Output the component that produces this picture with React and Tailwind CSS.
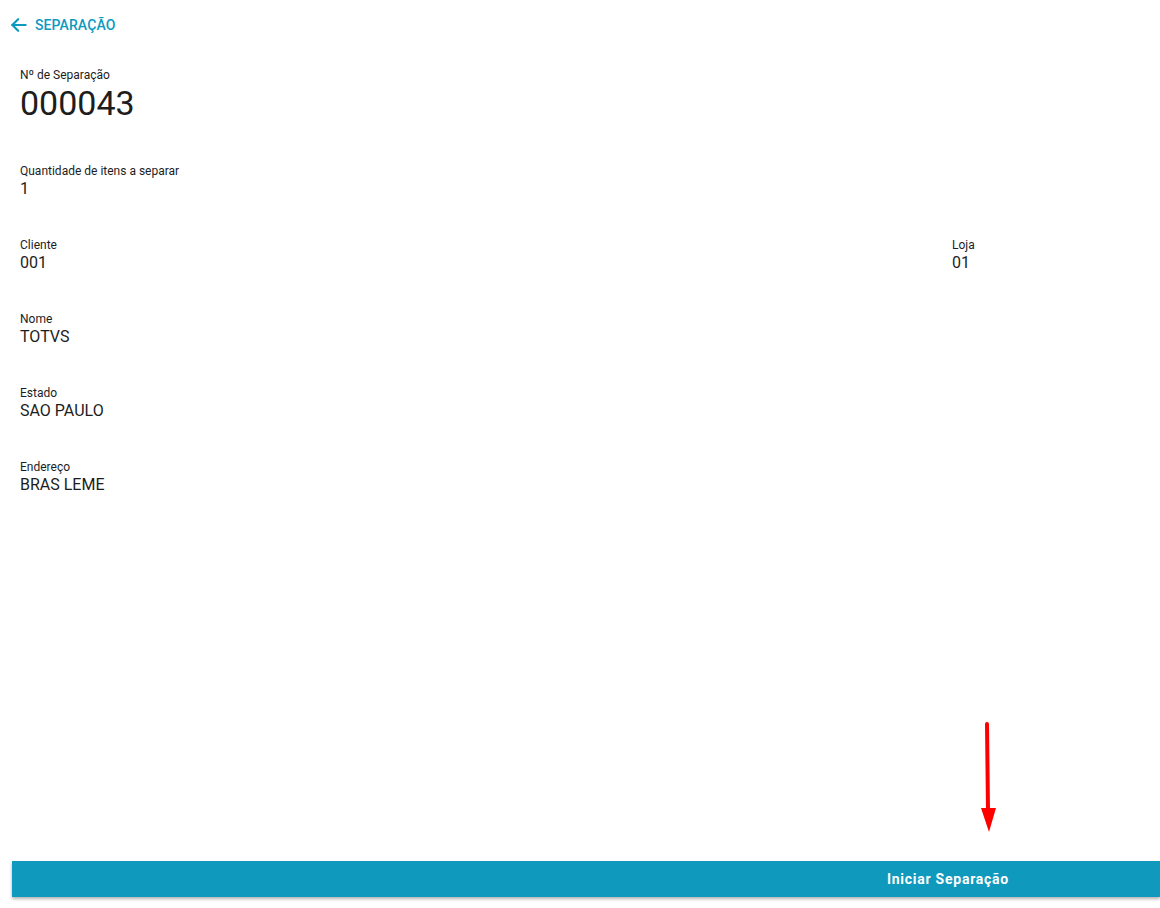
import React from "react";

function Field({ label, value, className = "" }) {
  return (
    <div className={className}>
      <div className="text-[12px] leading-[16px] text-[#1d1d1d]">{label}</div>
      <div className="text-[16px] leading-[20px] text-[#1d1d1d]">{value}</div>
    </div>
  );
}

export default function App() {
  return (
    <div
      className="relative w-[1160px] h-[908px] bg-white overflow-hidden flex flex-col"
      style={{ fontFamily: "Roboto, 'Liberation Sans', sans-serif" }}
    >
      <div className="flex items-center h-[50px] pl-[9px] gap-[6px]">
        <svg width="20" height="20" viewBox="0 0 24 24" fill="none" stroke="#0c9ac0" strokeWidth="2.6" strokeLinecap="round" strokeLinejoin="round">
          <path d="M20 12H4" />
          <path d="M11 5l-7 7 7 7" />
        </svg>
        <span className="text-[14px] font-medium text-[#0c9ac0] tracking-[0.1px]">SEPARAÇÃO</span>
      </div>

      <div className="pl-[20px] pt-[18px]">
        <div className="text-[12px] leading-[15px] text-[#1d1d1d]">Nº de Separação</div>
        <div className="text-[34px] leading-[40px] text-[#1d1d1d]">000043</div>
      </div>

      <div className="pl-[20px] pt-[40px] flex flex-col gap-[38px]">
        <Field label="Quantidade de itens a separar" value="1" />
        <div className="flex">
          <Field className="w-[932px]" label="Cliente" value="001" />
          <Field label="Loja" value="01" />
        </div>
        <Field label="Nome" value="TOTVS" />
        <Field label="Estado" value="SAO PAULO" />
        <Field label="Endereço" value="BRAS LEME" />
      </div>

      <div className="mt-auto mb-[11px] ml-[12px] h-[36px] bg-[#0e99bd] shadow-[0_2px_3px_rgba(0,0,0,0.3)] flex items-center justify-end pr-[151px]">
        <span className="text-white text-[14px] font-bold tracking-[0.75px]">Iniciar Separação</span>
      </div>

      <svg className="absolute left-[978px] top-[720px]" width="24" height="116" viewBox="0 0 24 116">
        <path d="M9 4 L10 90" stroke="#ff0000" strokeWidth="4" strokeLinecap="round" />
        <path d="M3 88 L18 88 L11 112 Z" fill="#ff0000" />
      </svg>
    </div>
  );
}
